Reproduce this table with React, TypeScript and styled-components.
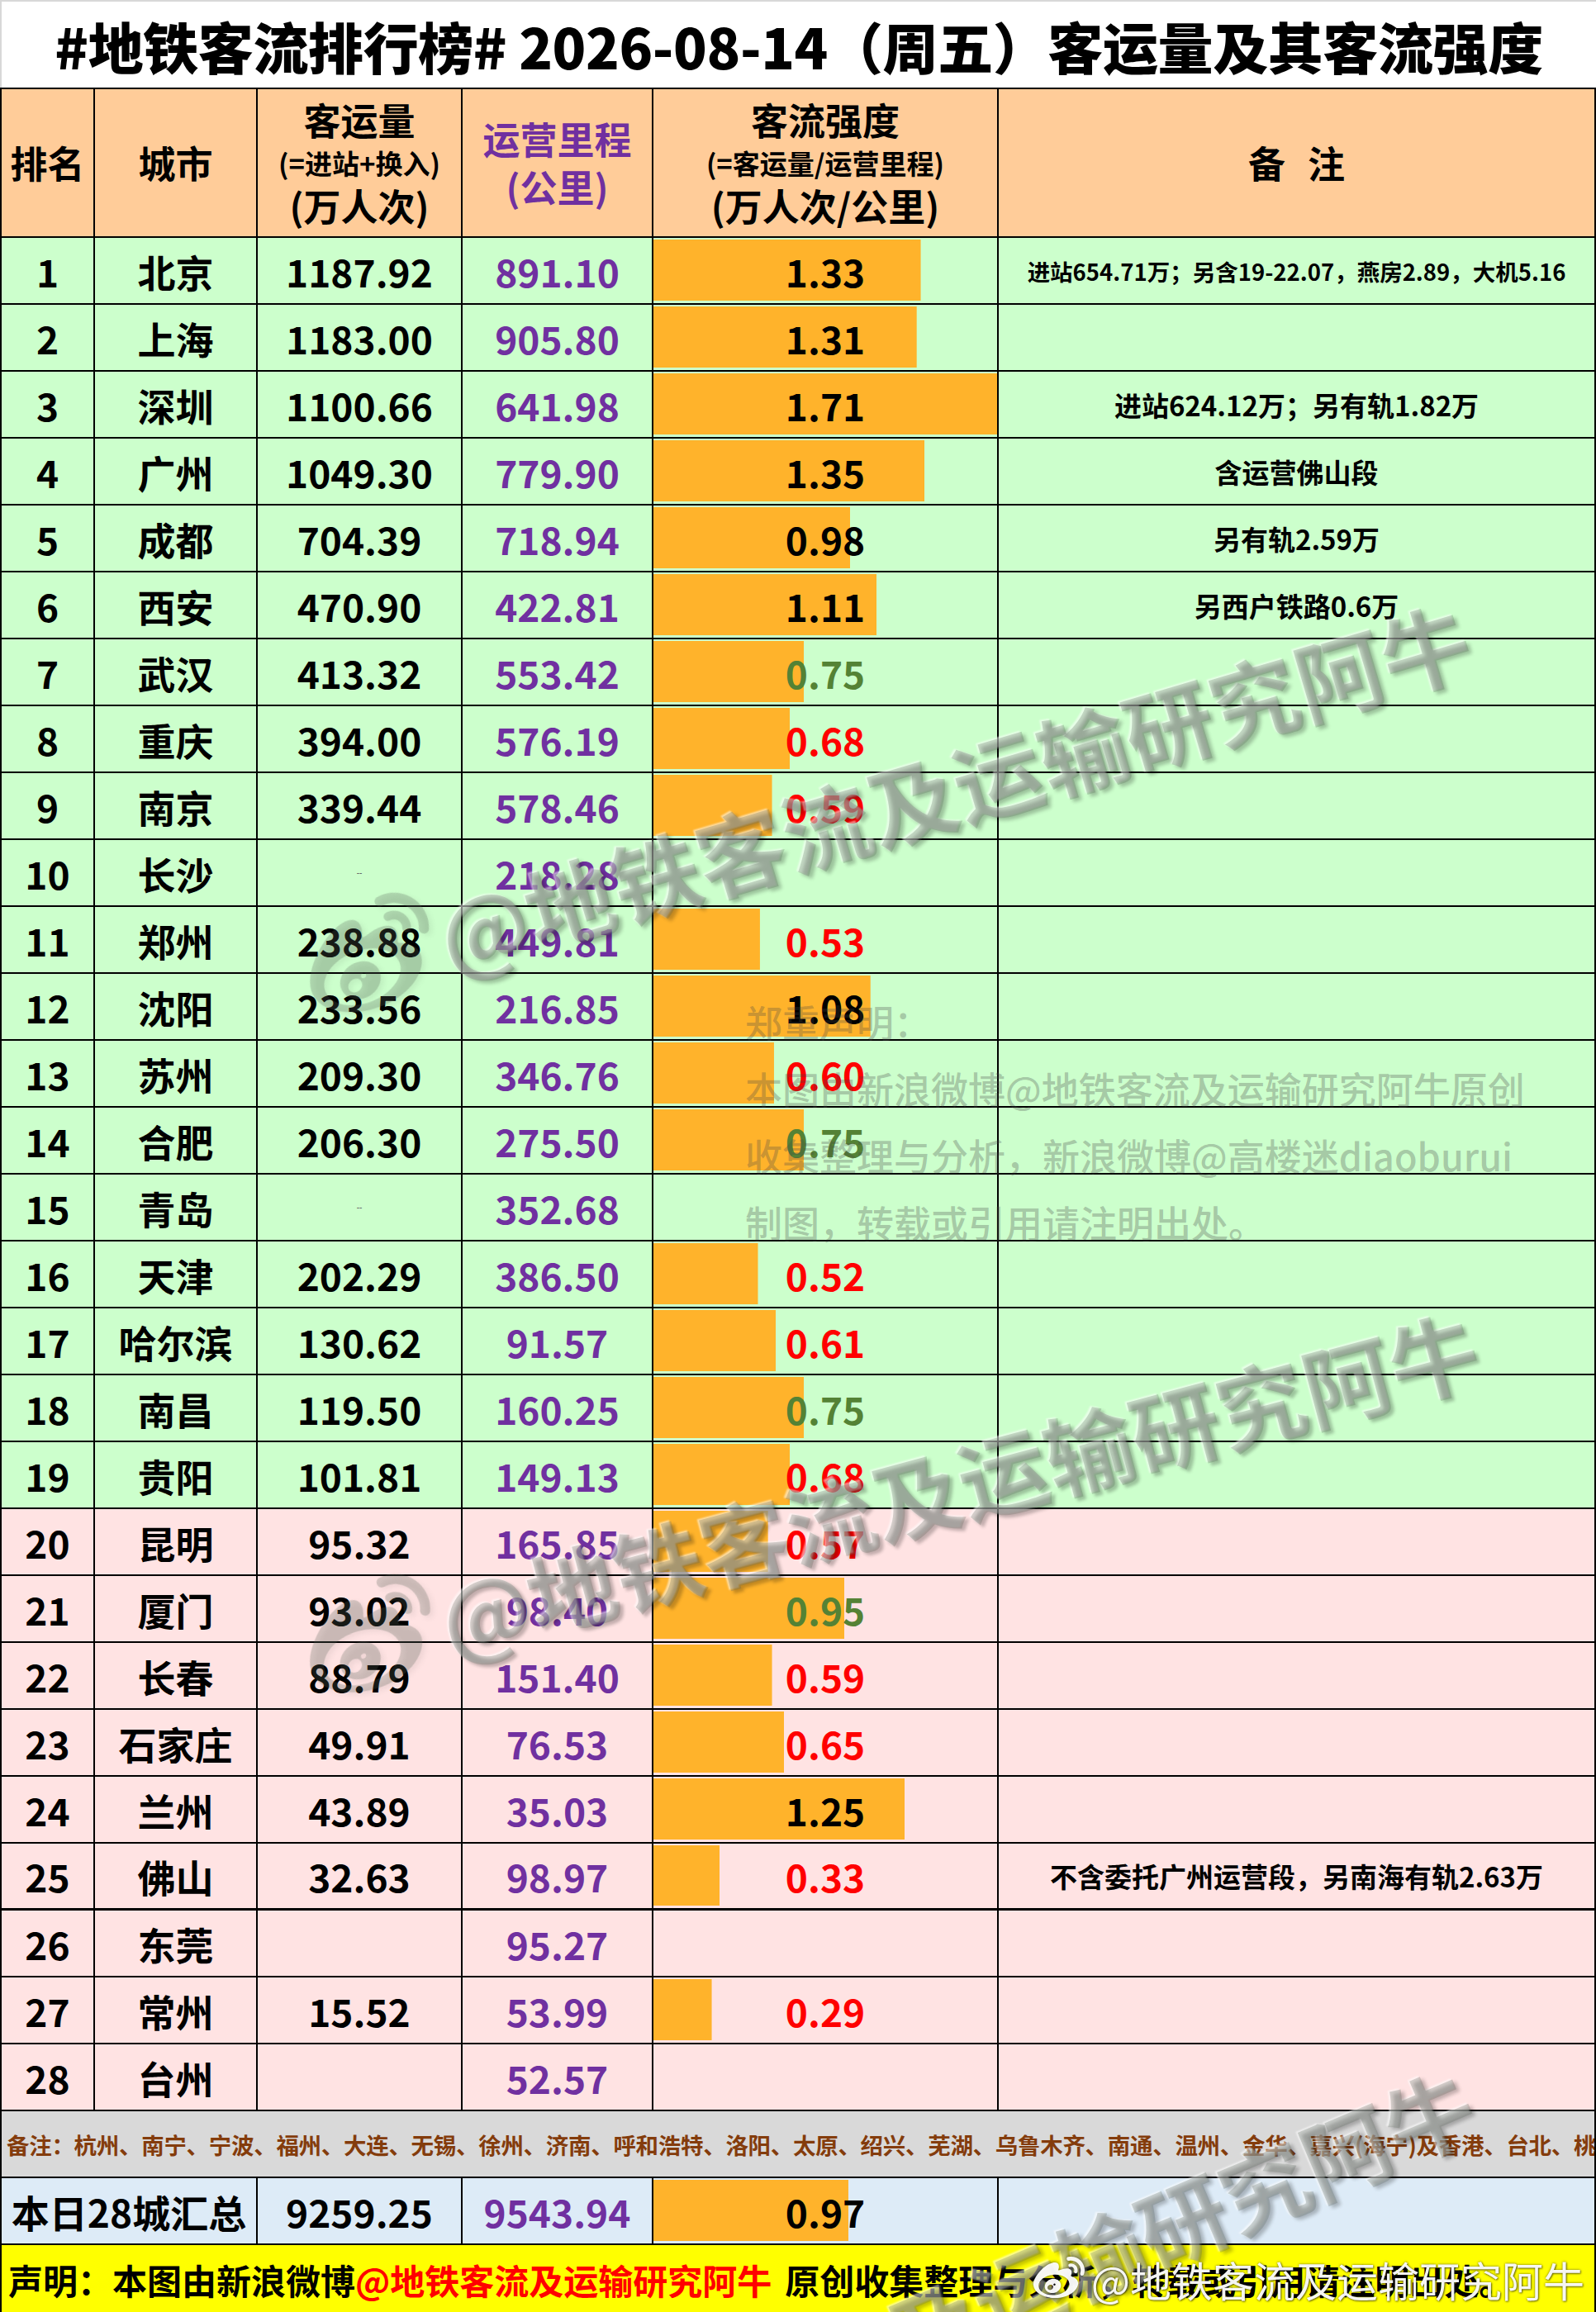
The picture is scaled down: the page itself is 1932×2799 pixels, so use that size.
import styled, { createGlobalStyle } from 'styled-components'
import { FaWeibo } from 'react-icons/fa'

const GlobalStyle = createGlobalStyle`
  html, body {
    margin: 0;
    padding: 0;
    background: #fff;
  }
  body {
    font-family: "Noto Sans CJK SC", "Noto Sans", sans-serif;
  }
  * { box-sizing: border-box; }
`

type Tone = 'green' | 'pink' | 'blue'
type Ink = 'black' | 'green' | 'red'

interface IRow {
  rank: number
  city: string
  flow?: string
  km: string
  ratio?: string
  ink?: Ink
  note?: string
  small?: boolean
}

const MAX_RATIO = 1.71

const ROWS: IRow[] = [
  { rank: 1, city: '北京', flow: '1187.92', km: '891.10', ratio: '1.33', ink: 'black', note: '进站654.71万；另含19-22.07，燕房2.89，大机5.16', small: true },
  { rank: 2, city: '上海', flow: '1183.00', km: '905.80', ratio: '1.31', ink: 'black' },
  { rank: 3, city: '深圳', flow: '1100.66', km: '641.98', ratio: '1.71', ink: 'black', note: '进站624.12万；另有轨1.82万' },
  { rank: 4, city: '广州', flow: '1049.30', km: '779.90', ratio: '1.35', ink: 'black', note: '含运营佛山段' },
  { rank: 5, city: '成都', flow: '704.39', km: '718.94', ratio: '0.98', ink: 'black', note: '另有轨2.59万' },
  { rank: 6, city: '西安', flow: '470.90', km: '422.81', ratio: '1.11', ink: 'black', note: '另西户铁路0.6万' },
  { rank: 7, city: '武汉', flow: '413.32', km: '553.42', ratio: '0.75', ink: 'green' },
  { rank: 8, city: '重庆', flow: '394.00', km: '576.19', ratio: '0.68', ink: 'red' },
  { rank: 9, city: '南京', flow: '339.44', km: '578.46', ratio: '0.59', ink: 'red' },
  { rank: 10, city: '长沙', flow: '-', km: '218.28' },
  { rank: 11, city: '郑州', flow: '238.88', km: '449.81', ratio: '0.53', ink: 'red' },
  { rank: 12, city: '沈阳', flow: '233.56', km: '216.85', ratio: '1.08', ink: 'black' },
  { rank: 13, city: '苏州', flow: '209.30', km: '346.76', ratio: '0.60', ink: 'red' },
  { rank: 14, city: '合肥', flow: '206.30', km: '275.50', ratio: '0.75', ink: 'green' },
  { rank: 15, city: '青岛', flow: '-', km: '352.68' },
  { rank: 16, city: '天津', flow: '202.29', km: '386.50', ratio: '0.52', ink: 'red' },
  { rank: 17, city: '哈尔滨', flow: '130.62', km: '91.57', ratio: '0.61', ink: 'red' },
  { rank: 18, city: '南昌', flow: '119.50', km: '160.25', ratio: '0.75', ink: 'green' },
  { rank: 19, city: '贵阳', flow: '101.81', km: '149.13', ratio: '0.68', ink: 'red' },
  { rank: 20, city: '昆明', flow: '95.32', km: '165.85', ratio: '0.57', ink: 'red' },
  { rank: 21, city: '厦门', flow: '93.02', km: '98.40', ratio: '0.95', ink: 'green' },
  { rank: 22, city: '长春', flow: '88.79', km: '151.40', ratio: '0.59', ink: 'red' },
  { rank: 23, city: '石家庄', flow: '49.91', km: '76.53', ratio: '0.65', ink: 'red' },
  { rank: 24, city: '兰州', flow: '43.89', km: '35.03', ratio: '1.25', ink: 'black' },
  { rank: 25, city: '佛山', flow: '32.63', km: '98.97', ratio: '0.33', ink: 'red', note: '不含委托广州运营段，另南海有轨2.63万' },
  { rank: 26, city: '东莞', km: '95.27' },
  { rank: 27, city: '常州', flow: '15.52', km: '53.99', ratio: '0.29', ink: 'red' },
  { rank: 28, city: '台州', km: '52.57' },
]

const TONES: Record<Tone, string> = {
  green: '#CCFFCC',
  pink: '#FFE3E3',
  blue: '#DDEBF7',
}

const INKS: Record<Ink, string> = {
  black: '#000000',
  green: '#548235',
  red: '#FF0000',
}

// watermark placements: left/top of the box, rotated round its left middle
const MARKS = [
  { left: 372, top: 1108, angle: -16.5 },
  { left: 372, top: 1930, angle: -15 },
  { left: 430, top: 3035, angle: -23 },
]

const App = () => {
  return (
    <Page>
      <GlobalStyle />
      <TitleBar>#地铁客流排行榜# 2026-08-14（周五）客运量及其客流强度</TitleBar>

      <Table>
        <HeadCell>排名</HeadCell>
        <HeadCell>城市</HeadCell>
        <HeadCell>
          <span>客运量</span>
          <SubHead>(=进站+换入)</SubHead>
          <span>(万人次)</span>
        </HeadCell>
        <HeadCell $purple>
          <span>运营里程</span>
          <span>(公里)</span>
        </HeadCell>
        <HeadCell>
          <span>客流强度</span>
          <SubHead>(=客运量/运营里程)</SubHead>
          <span>(万人次/公里)</span>
        </HeadCell>
        <HeadCell $spaced>备注</HeadCell>

        {ROWS.map((row) => {
          const tone: Tone = row.rank <= 19 ? 'green' : 'pink'
          const width = row.ratio ? (parseFloat(row.ratio) / MAX_RATIO) * 100 : 0
          const thick = row.rank === 25
          return (
            <Row key={row.rank}>
              <Cell $tone={tone} $thick={thick}>{row.rank}</Cell>
              <Cell $tone={tone} $thick={thick}>{row.city}</Cell>
              <Cell $tone={tone} $thick={thick}>
                {row.flow === '-' ? <TinyDash>--</TinyDash> : row.flow}
              </Cell>
              <Cell $tone={tone} $thick={thick} $purple>{row.km}</Cell>
              <BarCell
                $tone={tone}
                $thick={thick}
                $ink={row.ink ?? 'black'}
                style={{ backgroundSize: `${width}% calc(100% - 5px)` }}
              >
                {row.ratio}
              </BarCell>
              <NoteCell $tone={tone} $thick={thick} $small={row.small}>{row.note}</NoteCell>
            </Row>
          )
        })}

        <FootNote>
          备注：杭州、南宁、宁波、福州、大连、无锡、徐州、济南、呼和浩特、洛阳、太原、绍兴、芜湖、乌鲁木齐、南通、温州、金华、嘉兴(海宁)及香港、台北、桃园、高雄等城市未列入
        </FootNote>

        <Row>
          <TotalLabel>本日28城汇总</TotalLabel>
          <Cell $tone="blue">9259.25</Cell>
          <Cell $tone="blue" $purple>9543.94</Cell>
          <BarCell
            $tone="blue"
            $ink="black"
            style={{ backgroundSize: `${(0.97 / MAX_RATIO) * 100}% calc(100% - 5px)` }}
          >
            0.97
          </BarCell>
          <NoteCell $tone="blue" />
        </Row>
      </Table>

      <Statement>
        声明：本图由新浪微博<Red>@地铁客流及运输研究阿牛</Red>原创收集整理与分析，转载或引用请注明出处。
      </Statement>

      <Notice>
        <div>郑重声明：</div>
        <div>本图由新浪微博@地铁客流及运输研究阿牛原创</div>
        <div>收集整理与分析，新浪微博@高楼迷diaoburui</div>
        <div>制图，转载或引用请注明出处。</div>
      </Notice>

      {MARKS.map((m, i) => (
        <Emboss key={i} $left={m.left} $top={m.top} $angle={m.angle}>
          <FaWeibo />
          <span>@地铁客流及运输研究阿牛</span>
        </Emboss>
      ))}

      <CornerMark>
        <FaWeibo />
        <span>@地铁客流及运输研究阿牛</span>
      </CornerMark>
    </Page>
  )
}

const Page = styled.div`
  position: relative;
  width: 1932px;
  height: 2799px;
  overflow: hidden;
  background: #fff;
  color: #000;
  font-family: "Noto Sans CJK SC", "Noto Sans", sans-serif;
`

const TitleBar = styled.div`
  height: 106px;
  display: flex;
  align-items: center;
  justify-content: center;
  border-top: 2px solid #d8d8d8;
  border-left: 2px solid #d8d8d8;
  font-size: 67px;
  font-weight: 900;
  letter-spacing: -0.4px;
  white-space: nowrap;
`

const Table = styled.div`
  display: grid;
  grid-template-columns: 113px 197px 248px 231px 418px 1fr;
  border-top: 2px solid #000;
  border-left: 2px solid #000;
`

const Row = styled.div`
  display: contents;
`

const HeadCell = styled.div<{ $purple?: boolean; $spaced?: boolean }>`
  height: 180px;
  display: flex;
  flex-direction: column;
  align-items: center;
  justify-content: center;
  background: #FFCC99;
  border-right: 2px solid #000;
  border-bottom: 2px solid #000;
  color: ${(p) => (p.$purple ? '#7030A0' : '#000')};
  font-size: 45px;
  font-weight: 700;
  line-height: 58px;
  letter-spacing: ${(p) => (p.$spaced ? '0.6em' : '0')};
  padding-left: ${(p) => (p.$spaced ? '0.6em' : '0')};
  white-space: nowrap;
`

const SubHead = styled.span`
  font-size: 33px;
  line-height: 46px;
`

const Cell = styled.div<{ $tone: Tone; $purple?: boolean; $thick?: boolean }>`
  height: 81px;
  display: flex;
  align-items: center;
  justify-content: center;
  background: ${(p) => TONES[p.$tone]};
  border-right: 2px solid #000;
  border-bottom: ${(p) => (p.$thick ? '3px' : '2px')} solid #000;
  color: ${(p) => (p.$purple ? '#7030A0' : '#000')};
  font-size: 46px;
  font-weight: 700;
  white-space: nowrap;
`

const BarCell = styled(Cell)<{ $ink: Ink }>`
  color: ${(p) => INKS[p.$ink]};
  background-image: linear-gradient(#FFB32B, #FFB32B);
  background-repeat: no-repeat;
  background-position: 0 2px;
`

const NoteCell = styled(Cell)<{ $small?: boolean }>`
  font-size: ${(p) => (p.$small ? '27.5px' : '33px')};
`

const TinyDash = styled.span`
  font-size: 9px;
  color: #666;
`

const FootNote = styled.div`
  grid-column: 1 / -1;
  height: 81px;
  display: flex;
  align-items: center;
  padding-left: 6px;
  background: #D9D9D9;
  border-right: 2px solid #000;
  border-bottom: 2px solid #000;
  color: #843C0C;
  font-size: 27.5px;
  font-weight: 700;
  letter-spacing: -0.3px;
  white-space: nowrap;
  overflow: hidden;
`

const TotalLabel = styled.div`
  grid-column: 1 / 3;
  height: 81px;
  display: flex;
  align-items: center;
  justify-content: center;
  background: #DDEBF7;
  border-right: 2px solid #000;
  border-bottom: 2px solid #000;
  font-size: 46px;
  font-weight: 700;
  white-space: nowrap;
`

const Statement = styled.div`
  height: 82px;
  display: flex;
  align-items: center;
  padding-left: 8px;
  background: #FFFF00;
  border-left: 2px solid #000;
  border-right: 2px solid #000;
  font-size: 42px;
  font-weight: 700;
  white-space: nowrap;
  overflow: hidden;
`

const Red = styled.span`
  color: #FF0000;
  margin-right: 16px;
`

const Notice = styled.div`
  position: absolute;
  left: 902px;
  top: 1196px;
  color: rgba(70, 70, 70, 0.3);
  font-size: 45px;
  font-weight: 500;
  line-height: 81px;
  white-space: nowrap;
  pointer-events: none;
`

const Emboss = styled.div<{ $left: number; $top: number; $angle: number }>`
  position: absolute;
  left: ${(p) => p.$left}px;
  top: ${(p) => p.$top}px;
  height: 150px;
  display: flex;
  align-items: center;
  gap: 8px;
  transform: rotate(${(p) => p.$angle}deg);
  transform-origin: left center;
  color: rgba(90, 100, 90, 0.26);
  font-size: 108px;
  font-weight: 700;
  line-height: 150px;
  white-space: nowrap;
  text-shadow: 3px 4px 4px rgba(0, 0, 0, 0.24), -2px -2px 2px rgba(255, 255, 255, 0.55);
  pointer-events: none;
  svg {
    width: 160px;
    height: 160px;
    filter: drop-shadow(3px 4px 3px rgba(0, 0, 0, 0.24));
  }
`

const CornerMark = styled.div`
  position: absolute;
  right: 14px;
  bottom: 4px;
  display: flex;
  align-items: center;
  gap: 8px;
  color: rgba(255, 255, 255, 0.95);
  font-size: 50px;
  font-weight: 400;
  white-space: nowrap;
  text-shadow: 0 0 3px rgba(0, 0, 0, 0.55), 1px 1px 2px rgba(0, 0, 0, 0.45);
  pointer-events: none;
  svg {
    width: 62px;
    height: 62px;
    filter: drop-shadow(0 0 2px rgba(0, 0, 0, 0.6));
  }
`

export default App
